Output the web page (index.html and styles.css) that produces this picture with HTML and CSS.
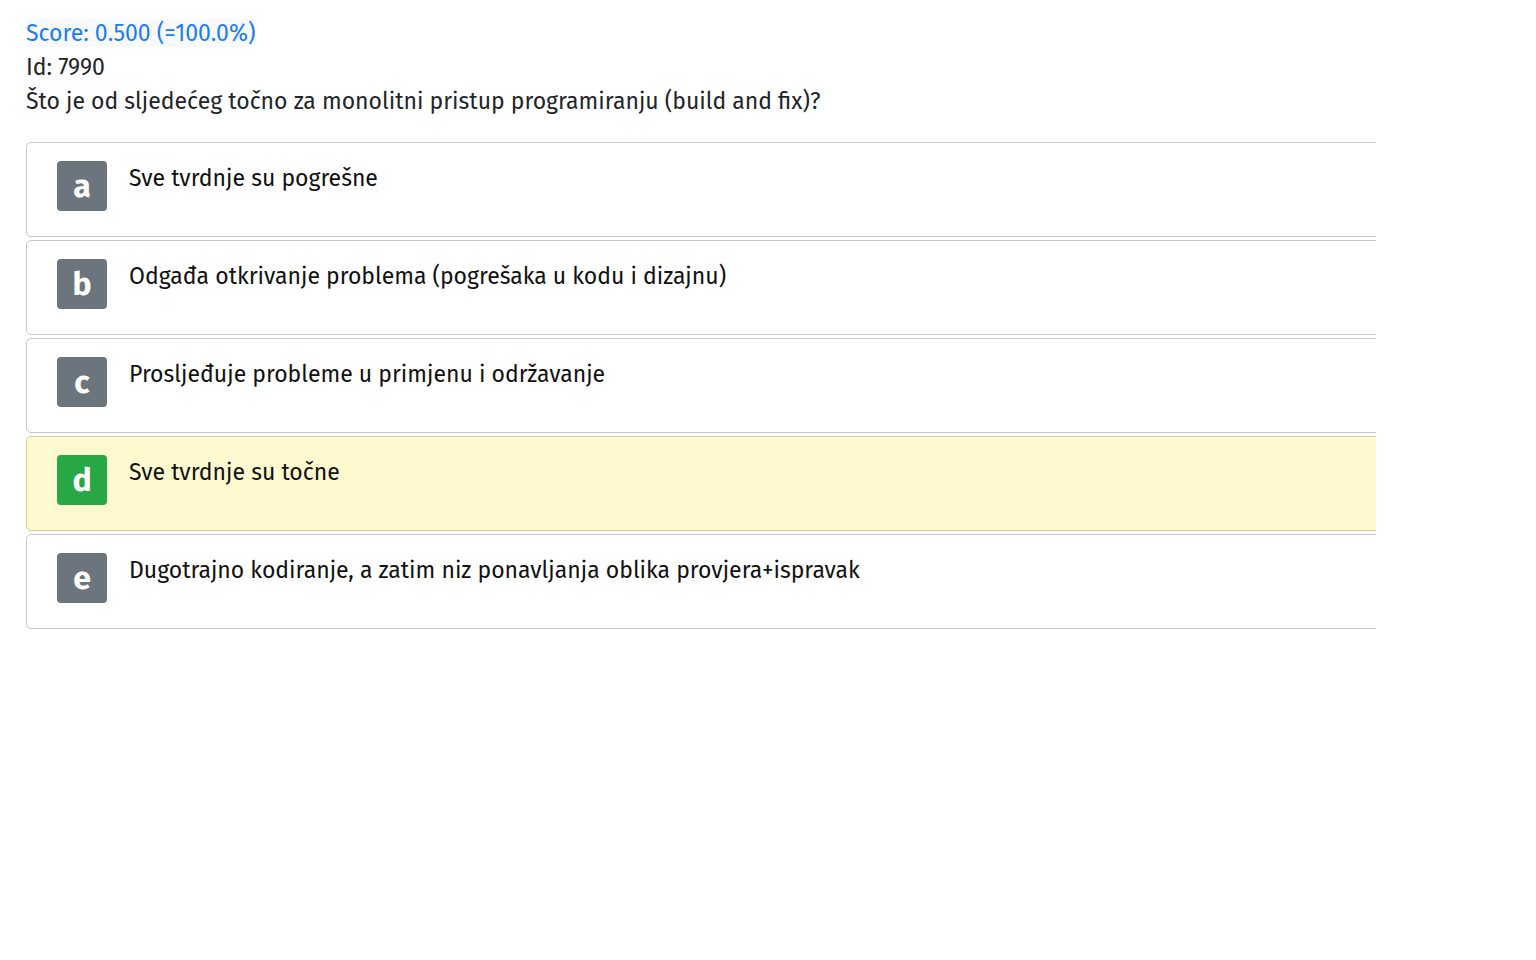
FILE: index.html
```html
<!DOCTYPE html>
<html lang="hr">
<head>
<meta charset="utf-8">
<title>Pitanje 7990</title>
<link rel="stylesheet" href="styles.css">
</head>
<body>
<div class="page">
  <div class="meta">
    <div><span class="score">Score: 0.500 (=100.0%)</span></div>
    <div class="id">Id: 7990</div>
    <div class="question">Što je od sljedećeg točno za monolitni pristup programiranju (build and fix)?</div>
  </div>
  <div class="answers">
    <div class="answer">
      <span class="badge">a</span>
      <span class="text">Sve tvrdnje su pogrešne</span>
    </div>
    <div class="answer">
      <span class="badge">b</span>
      <span class="text">Odgađa otkrivanje problema (pogrešaka u kodu i dizajnu)</span>
    </div>
    <div class="answer">
      <span class="badge">c</span>
      <span class="text">Prosljeđuje probleme u primjenu i održavanje</span>
    </div>
    <div class="answer correct">
      <span class="badge">d</span>
      <span class="text">Sve tvrdnje su točne</span>
    </div>
    <div class="answer">
      <span class="badge">e</span>
      <span class="text">Dugotrajno kodiranje, a zatim niz ponavljanja oblika provjera+ispravak</span>
    </div>
  </div>
</div>
</body>
</html>
```

FILE: styles.css
```css
html, body {
  margin: 0;
  padding: 0;
  background: #ffffff;
}
body {
  font-family: "Fira Sans", "Noto Sans", sans-serif;
  font-size: 23px;
  color: #212529;
}
.page {
  width: 1350px;
  margin-left: 26px;
  padding-top: 16px;
  overflow: hidden;
}
.meta {
  line-height: 34px;
}
.score {
  color: #1a7cf7;
  background: #f8f9fa;
  display: inline-block;
  line-height: 28px;
}
.answers {
  margin-top: 24px;
  display: flex;
  flex-direction: column;
  gap: 3px;
}
.answer {
  width: 1400px;
  box-sizing: border-box;
  display: flex;
  align-items: flex-start;
  gap: 22px;
  padding: 18px 30px 25px 30px;
  border: 1px solid #c9c9c9;
  border-radius: 5px;
  background: #ffffff;
}
.answer.correct {
  background: #fef9cf;
  border-color: #d2cca4;
}
.badge {
  flex: 0 0 auto;
  width: 50px;
  height: 50px;
  border-radius: 4px;
  background: #6c757d;
  color: #ffffff;
  font-weight: 700;
  font-size: 32px;
  line-height: 50px;
  text-align: center;
}
.correct .badge {
  background: #28a745;
}
.text {
  line-height: 34px;
  color: #111111;
}
```
